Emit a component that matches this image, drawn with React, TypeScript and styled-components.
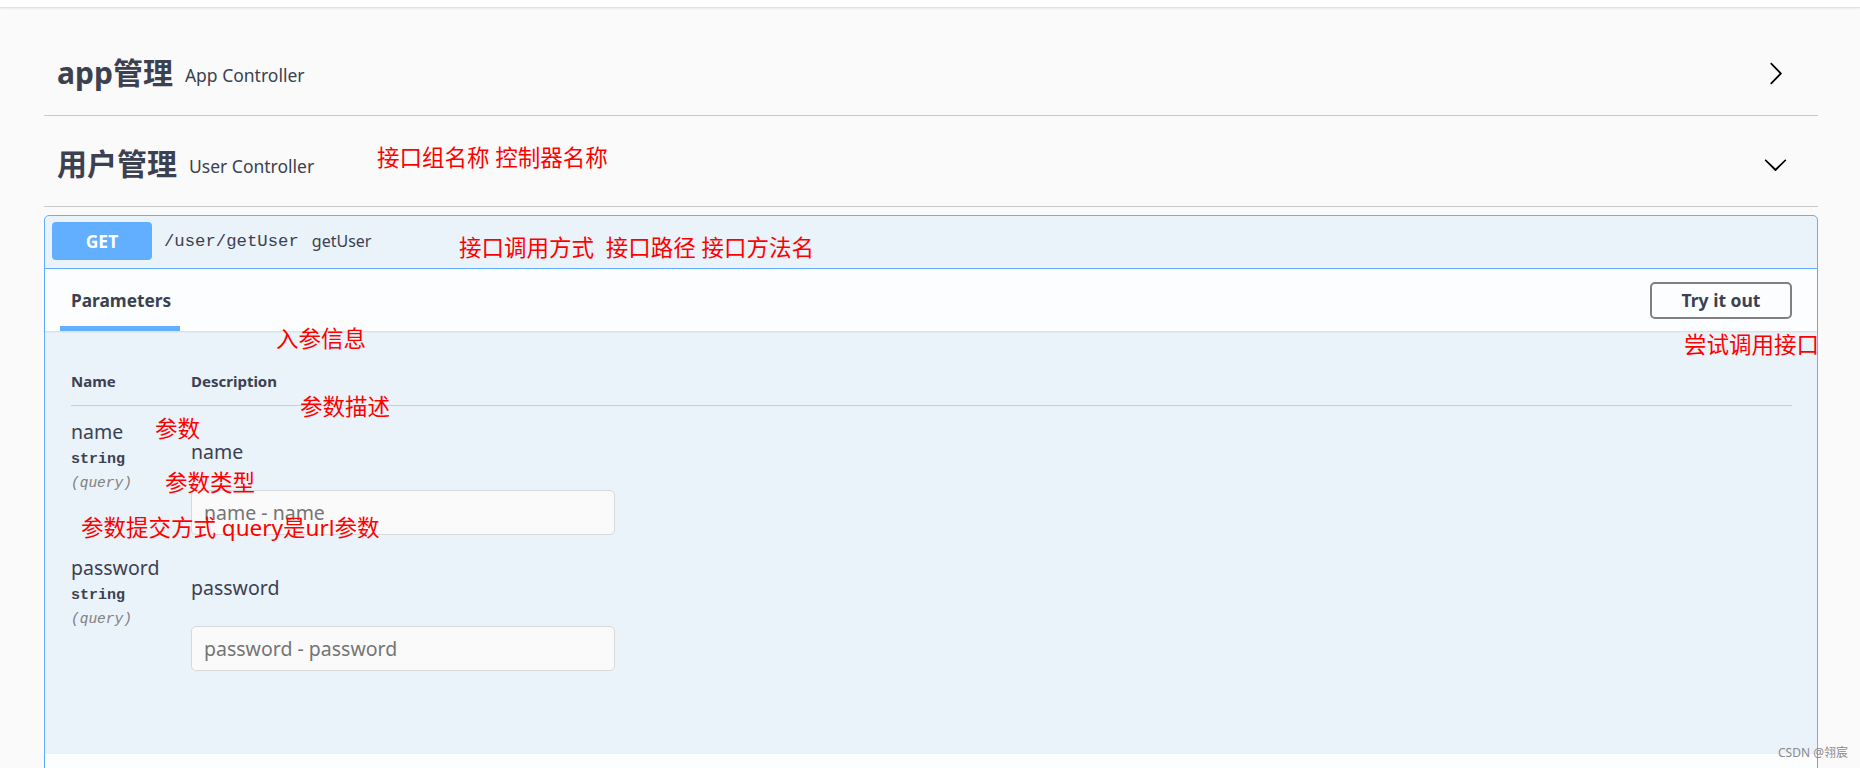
import React from "react";
import styled, { createGlobalStyle } from "styled-components";

const GlobalStyle = createGlobalStyle`
  html, body {
    margin: 0;
    padding: 0;
    background: #fafafa;
    overflow: hidden;
  }
  body {
    font-family: "Noto Sans", "Noto Sans CJK SC", sans-serif;
    color: #3b4151;
  }
  * { box-sizing: border-box; }
`;

const Page = styled.div`
  position: relative;
  width: 1860px;
  min-height: 768px;
  background: #fafafa;
`;

const TopBar = styled.div`
  height: 8px;
  background: #ffffff;
  border-bottom: 1px solid #e2e2e2;
  box-shadow: 0 1px 2px rgba(0, 0, 0, 0.06);
`;

const Wrapper = styled.div`
  padding: 26px 42px 0 44px;
`;

const TagSection = styled.section<{ $gap: number }>`
  display: flex;
  flex-direction: column;
  margin-top: ${(p) => p.$gap}px;
`;

const TagHeader = styled.div`
  display: flex;
  align-items: center;
  height: 82px;
  padding: 0 30px 3px 13px;
  border-bottom: 1px solid #c8c9cc;
`;

const TagTitle = styled.h3`
  margin: 0;
  font-size: 30px;
  font-weight: 700;
  line-height: 36px;
  color: #3b4151;
`;

const TagDesc = styled.small`
  margin-left: 12px;
  font-size: 17.5px;
  line-height: 22px;
  color: #3b4151;
  padding-top: 4px;
`;

const Spacer = styled.div`
  flex: 1;
`;

const ArrowSvg = styled.svg<{ $down?: boolean }>`
  width: 25px;
  height: 25px;
  display: block;
  transform: ${(p) => (p.$down ? "rotate(90deg)" : "none")};
`;

const Chevron = ({ down }: { down?: boolean }) => (
  <ArrowSvg $down={down} viewBox="0 0 20 20">
    <path
      fill="#000"
      d="M13.25 10L6.109 2.58c-.268-.27-.268-.707 0-.979.268-.27.701-.27.969 0l7.83 7.908c.268.271.268.709 0 .979l-7.83 7.908c-.268.271-.701.27-.969 0-.268-.269-.268-.707 0-.979L13.25 10z"
    />
  </ArrowSvg>
);

const Opblock = styled.div`
  margin-top: 8px;
  border: 1px solid #61affe;
  border-radius: 5px;
  background: rgba(97, 175, 254, 0.1);
`;

const Summary = styled.div`
  display: flex;
  align-items: center;
  padding: 6px 7px 8px;
  border-bottom: 1px solid #61affe;
`;

const Method = styled.span`
  width: 100px;
  height: 38px;
  display: flex;
  align-items: center;
  justify-content: center;
  background: #61affe;
  border-radius: 4px;
  color: #fff;
  font-size: 17.5px;
  font-weight: 700;
`;

const Path = styled.span`
  margin-left: 12px;
  font-family: "Liberation Mono", monospace;
  font-size: 17.3px;
  color: #3b4151;
`;

const OpDesc = styled.span`
  margin-left: 13px;
  font-size: 16px;
  color: #3b4151;
`;

const SectionHeader = styled.div`
  display: flex;
  align-items: stretch;
  height: 62px;
  padding: 0 25px 0 15px;
  background: rgba(255, 255, 255, 0.8);
  box-shadow: 0 1px 2px rgba(0, 0, 0, 0.1);
`;

const Tab = styled.h4<{ $active?: boolean }>`
  margin: 0;
  display: flex;
  align-items: center;
  padding: 5px 9px 0 11px;
  font-size: 17.3px;
  font-weight: 700;
  color: #3b4151;
  border-bottom: 5px solid ${(p) => (p.$active ? "#61affe" : "transparent")};
`;

const TryButton = styled.button`
  margin-left: auto;
  align-self: center;
  width: 142px;
  height: 37px;
  border: 2px solid #808080;
  border-radius: 5px;
  background: transparent;
  font-family: "Noto Sans", sans-serif;
  font-size: 17.5px;
  font-weight: 700;
  color: #3b4151;
`;

const ParamsBody = styled.div`
  padding: 41px 25px 76px 26px;
`;

const ParamGrid = styled.div`
  display: grid;
  grid-template-columns: 120px 1fr;
`;

const HeadCell = styled.div`
  font-size: 15px;
  font-weight: 700;
  line-height: 18px;
  padding-bottom: 15px;
  border-bottom: 1px solid rgba(59, 65, 81, 0.2);
`;

const NameCell = styled.div`
  display: flex;
  flex-direction: column;
  padding: 15px 0 7px;
`;

const ParamName = styled.div`
  font-size: 19.5px;
  line-height: 22px;
`;

const ParamType = styled.div`
  margin-top: 6px;
  font-family: "Liberation Mono", monospace;
  font-size: 15px;
  font-weight: 700;
  line-height: 22px;
`;

const ParamIn = styled.div`
  font-family: "Liberation Mono", monospace;
  font-size: 14.5px;
  font-style: italic;
  line-height: 24px;
  color: #808080;
`;

const DescCell = styled.div`
  display: flex;
  flex-direction: column;
  align-items: flex-start;
  padding: 35px 0 7px;
`;

const DescText = styled.div`
  font-size: 19.5px;
  line-height: 22px;
`;

const Input = styled.input`
  margin-top: 27px;
  width: 424px;
  height: 45px;
  padding: 0 12px;
  border: 1px solid #d9d9d9;
  border-radius: 5px;
  background: #fafafa;
  font-family: "Noto Sans", sans-serif;
  font-size: 19.5px;
  color: #3b4151;
  &::placeholder {
    color: #757575;
  }
`;

const ResponsesStrip = styled.div`
  height: 60px;
  background: rgba(255, 255, 255, 0.8);
  box-shadow: 0 1px 2px rgba(0, 0, 0, 0.1);
`;

const Annotation = styled.span<{ $left: number; $top: number }>`
  position: absolute;
  left: ${(p) => p.$left}px;
  top: ${(p) => p.$top}px;
  font-family: "Noto Sans", "Noto Sans CJK SC", sans-serif;
  font-size: 22.5px;
  line-height: 24px;
  color: #ff0000;
  white-space: pre;
`;

const Watermark = styled.span`
  position: absolute;
  left: 1778px;
  top: 745px;
  font-family: "Noto Sans", "Noto Sans CJK SC", sans-serif;
  font-size: 12px;
  line-height: 16px;
  color: #8a8a8a;
  white-space: pre;
`;

type Param = { name: string; type: string; loc: string };

const params: Param[] = [
  { name: "name", type: "string", loc: "(query)" },
  { name: "password", type: "string", loc: "(query)" },
];

const notes: { text: string; x: number; y: number }[] = [
  { text: "接口组名称 控制器名称", x: 377, y: 146 },
  { text: "接口调用方式  接口路径 接口方法名", x: 459, y: 236 },
  { text: "入参信息", x: 276, y: 327 },
  { text: "尝试调用接口", x: 1684, y: 333 },
  { text: "参数描述", x: 300, y: 395 },
  { text: "参数", x: 155, y: 417 },
  { text: "参数类型", x: 165, y: 471 },
  { text: "参数提交方式 query是url参数", x: 81, y: 516 },
];

export default function App() {
  return (
    <Page>
      <GlobalStyle />
      <TopBar />
      <Wrapper>
        <TagSection $gap={0}>
          <TagHeader>
            <TagTitle>app管理</TagTitle>
            <TagDesc>App Controller</TagDesc>
            <Spacer />
            <Chevron />
          </TagHeader>
        </TagSection>
        <TagSection $gap={9}>
          <TagHeader>
            <TagTitle>用户管理</TagTitle>
            <TagDesc>User Controller</TagDesc>
            <Spacer />
            <Chevron down />
          </TagHeader>
          <Opblock>
            <Summary>
              <Method>GET</Method>
              <Path>/user/getUser</Path>
              <OpDesc>getUser</OpDesc>
            </Summary>
            <SectionHeader>
              <Tab $active>Parameters</Tab>
              <TryButton>Try it out</TryButton>
            </SectionHeader>
            <ParamsBody>
              <ParamGrid>
                <HeadCell>Name</HeadCell>
                <HeadCell>Description</HeadCell>
                {params.map((p) => (
                  <React.Fragment key={p.name}>
                    <NameCell>
                      <ParamName>{p.name}</ParamName>
                      <ParamType>{p.type}</ParamType>
                      <ParamIn>{p.loc}</ParamIn>
                    </NameCell>
                    <DescCell>
                      <DescText>{p.name}</DescText>
                      <Input placeholder={`${p.name} - ${p.name}`} />
                    </DescCell>
                  </React.Fragment>
                ))}
              </ParamGrid>
            </ParamsBody>
            <ResponsesStrip />
          </Opblock>
        </TagSection>
      </Wrapper>
      {notes.map((n) => (
        <Annotation key={n.text} $left={n.x} $top={n.y}>
          {n.text}
        </Annotation>
      ))}
      <Watermark>CSDN @翎宸</Watermark>
    </Page>
  );
}
